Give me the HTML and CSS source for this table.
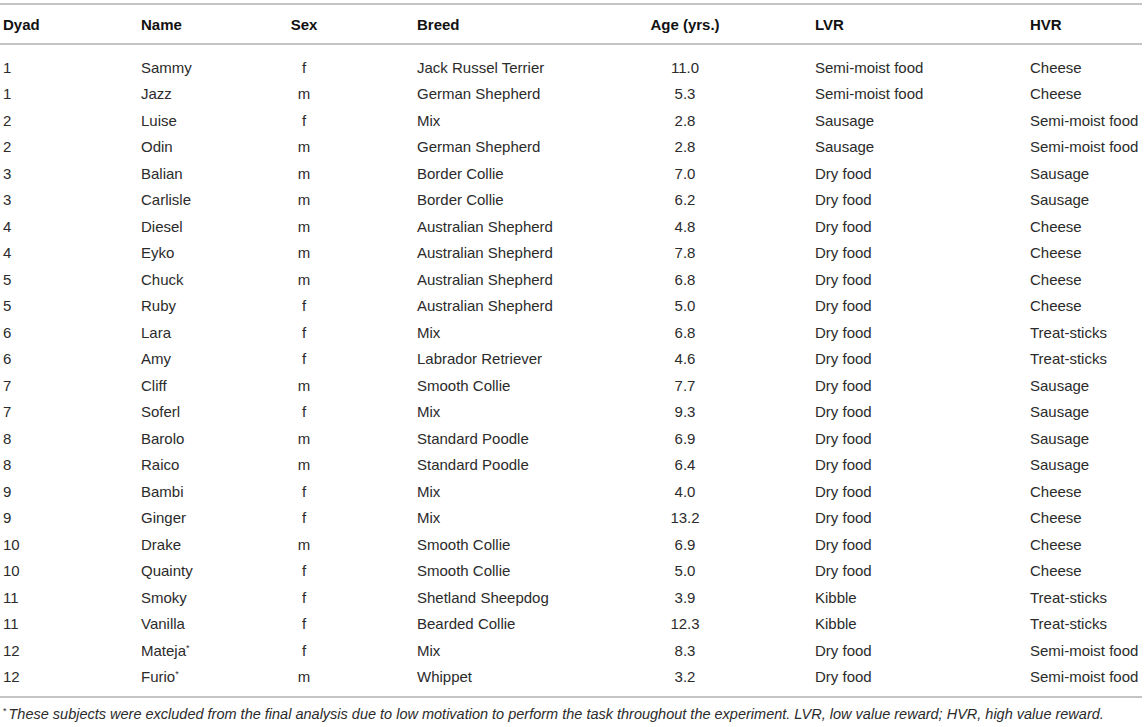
FILE: index.html
```html
<!DOCTYPE html>
<html lang="en">
<head>
  <meta charset="UTF-8" />
  <title>Dyads</title>
  <link rel="stylesheet" href="styles.css">
</head>
<body>
  <table class="dogs">
    <colgroup>
      <col class="c-dyad"><col class="c-name"><col class="c-sex"><col class="c-breed">
      <col class="c-age"><col class="c-lvr"><col class="c-hvr">
    </colgroup>
    <thead>
      <tr>
        <th>Dyad</th>
        <th>Name</th>
        <th class="mid">Sex</th>
        <th>Breed</th>
        <th class="mid">Age (yrs.)</th>
        <th>LVR</th>
        <th>HVR</th>
      </tr>
    </thead>
    <tbody>
      <tr><td>1</td><td>Sammy</td><td class="mid">f</td><td>Jack Russel Terrier</td><td class="mid">11.0</td><td>Semi-moist food</td><td>Cheese</td></tr>
      <tr><td>1</td><td>Jazz</td><td class="mid">m</td><td>German Shepherd</td><td class="mid">5.3</td><td>Semi-moist food</td><td>Cheese</td></tr>
      <tr><td>2</td><td>Luise</td><td class="mid">f</td><td>Mix</td><td class="mid">2.8</td><td>Sausage</td><td>Semi-moist food</td></tr>
      <tr><td>2</td><td>Odin</td><td class="mid">m</td><td>German Shepherd</td><td class="mid">2.8</td><td>Sausage</td><td>Semi-moist food</td></tr>
      <tr><td>3</td><td>Balian</td><td class="mid">m</td><td>Border Collie</td><td class="mid">7.0</td><td>Dry food</td><td>Sausage</td></tr>
      <tr><td>3</td><td>Carlisle</td><td class="mid">m</td><td>Border Collie</td><td class="mid">6.2</td><td>Dry food</td><td>Sausage</td></tr>
      <tr><td>4</td><td>Diesel</td><td class="mid">m</td><td>Australian Shepherd</td><td class="mid">4.8</td><td>Dry food</td><td>Cheese</td></tr>
      <tr><td>4</td><td>Eyko</td><td class="mid">m</td><td>Australian Shepherd</td><td class="mid">7.8</td><td>Dry food</td><td>Cheese</td></tr>
      <tr><td>5</td><td>Chuck</td><td class="mid">m</td><td>Australian Shepherd</td><td class="mid">6.8</td><td>Dry food</td><td>Cheese</td></tr>
      <tr><td>5</td><td>Ruby</td><td class="mid">f</td><td>Australian Shepherd</td><td class="mid">5.0</td><td>Dry food</td><td>Cheese</td></tr>
      <tr><td>6</td><td>Lara</td><td class="mid">f</td><td>Mix</td><td class="mid">6.8</td><td>Dry food</td><td>Treat-sticks</td></tr>
      <tr><td>6</td><td>Amy</td><td class="mid">f</td><td>Labrador Retriever</td><td class="mid">4.6</td><td>Dry food</td><td>Treat-sticks</td></tr>
      <tr><td>7</td><td>Cliff</td><td class="mid">m</td><td>Smooth Collie</td><td class="mid">7.7</td><td>Dry food</td><td>Sausage</td></tr>
      <tr><td>7</td><td>Soferl</td><td class="mid">f</td><td>Mix</td><td class="mid">9.3</td><td>Dry food</td><td>Sausage</td></tr>
      <tr><td>8</td><td>Barolo</td><td class="mid">m</td><td>Standard Poodle</td><td class="mid">6.9</td><td>Dry food</td><td>Sausage</td></tr>
      <tr><td>8</td><td>Raico</td><td class="mid">m</td><td>Standard Poodle</td><td class="mid">6.4</td><td>Dry food</td><td>Sausage</td></tr>
      <tr><td>9</td><td>Bambi</td><td class="mid">f</td><td>Mix</td><td class="mid">4.0</td><td>Dry food</td><td>Cheese</td></tr>
      <tr><td>9</td><td>Ginger</td><td class="mid">f</td><td>Mix</td><td class="mid">13.2</td><td>Dry food</td><td>Cheese</td></tr>
      <tr><td>10</td><td>Drake</td><td class="mid">m</td><td>Smooth Collie</td><td class="mid">6.9</td><td>Dry food</td><td>Cheese</td></tr>
      <tr><td>10</td><td>Quainty</td><td class="mid">f</td><td>Smooth Collie</td><td class="mid">5.0</td><td>Dry food</td><td>Cheese</td></tr>
      <tr><td>11</td><td>Smoky</td><td class="mid">f</td><td>Shetland Sheepdog</td><td class="mid">3.9</td><td>Kibble</td><td>Treat-sticks</td></tr>
      <tr><td>11</td><td>Vanilla</td><td class="mid">f</td><td>Bearded Collie</td><td class="mid">12.3</td><td>Kibble</td><td>Treat-sticks</td></tr>
      <tr><td>12</td><td>Mateja<sup>*</sup></td><td class="mid">f</td><td>Mix</td><td class="mid">8.3</td><td>Dry food</td><td>Semi-moist food</td></tr>
      <tr><td>12</td><td>Furio<sup>*</sup></td><td class="mid">m</td><td>Whippet</td><td class="mid">3.2</td><td>Dry food</td><td>Semi-moist food</td></tr>
    </tbody>
  </table>

  <p class="note"><sup>*</sup>These subjects were excluded from the final analysis due to low motivation to perform the task throughout the experiment. LVR, low value reward; HVR, high value reward.</p>
</body>
</html>
```

FILE: styles.css
```css
* {
  margin: 0;
  padding: 0;
  box-sizing: border-box;
}

body {
  background: #fff;
  color: #2b2b2b;
  font-family: "Liberation Sans", Arial, sans-serif;
  font-size: 15px;
  padding-top: 3px;
}

.dogs {
  width: 1142px;
  table-layout: fixed;
  border-collapse: separate;
  border-spacing: 0;
}

.c-dyad { width: 138px; }
.c-name { width: 56px; }
.c-sex { width: 220px; }
.c-breed { width: 144px; }
.c-age { width: 254px; }
.c-lvr { width: 215px; }
.c-hvr { width: 115px; }

.dogs th,
.dogs td {
  text-align: left;
  padding: 0 0 0 3px;
  white-space: nowrap;
}

.dogs th {
  height: 42px;
  font-weight: bold;
  color: #111;
  border-top: 2px solid #c4c4c4;
  border-bottom: 2px solid #c4c4c4;
}

.dogs td {
  height: 26.5px;
}

.dogs .mid {
  text-align: center;
  padding: 0;
}

.dogs tbody tr:first-child td {
  height: 35.5px;
  padding-top: 9px;
}

.dogs tbody tr:last-child td {
  height: 34px;
  padding-bottom: 7px;
  border-bottom: 2px solid #c4c4c4;
}

sup {
  font-size: 9px;
  line-height: 0;
  vertical-align: 5px;
}

.note {
  font-style: italic;
  font-size: 14.5px;
  padding: 8px 0 0 3px;
}

.note sup {
  font-style: normal;
  margin-right: 2px;
}
```
